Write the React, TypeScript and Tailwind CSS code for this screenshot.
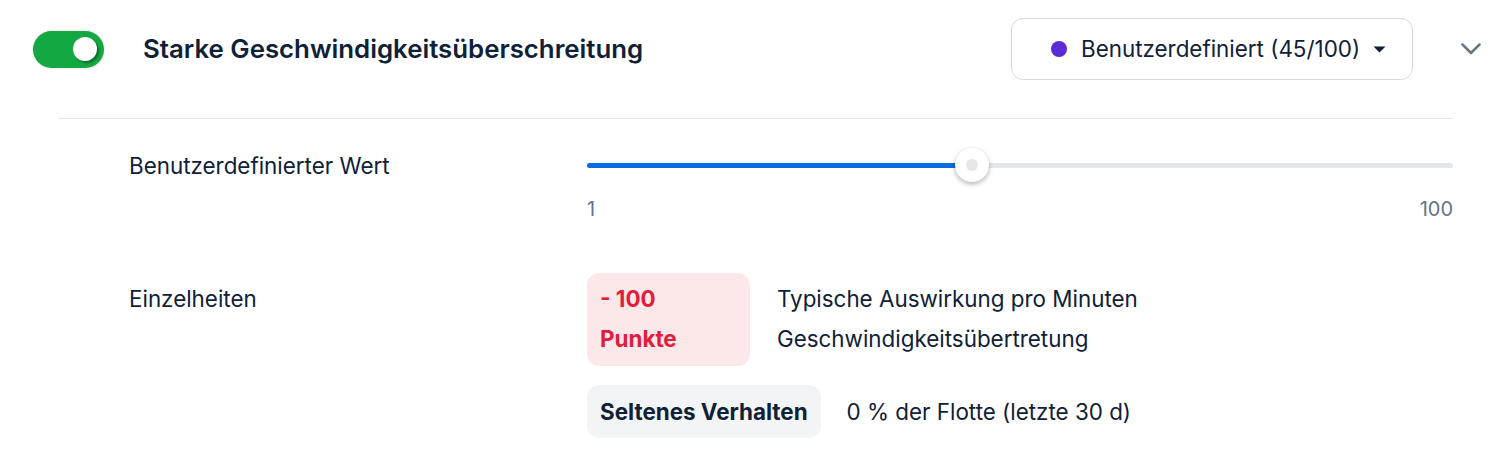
const value = 45;

export default function App() {
  const pct = ((value - 1) / 99) * 100;
  return (
    <div className="w-[1506px] h-[456px] bg-white text-[#0f2137] font-['Inter',sans-serif]">
      {/* HEADER */}
      <div className="flex items-center pl-[33px] pt-[18px]">
        <div className="w-[71px] h-[37px] rounded-full bg-[#13a841] shadow-[0_0_0_1px_rgba(0,0,0,0.06)] flex items-center justify-end pr-[7px]">
          <div className="w-[24px] h-[24px] rounded-full bg-white shadow-[2px_2px_2px_rgba(0,0,0,0.35)]" />
        </div>
        <h1 className="ml-[39px] text-[25.8px] font-semibold flex-1">Starke Geschwindigkeitsüberschreitung</h1>
        <button className="w-[402px] h-[62px] rounded-xl border border-[#d7dbe0] flex items-center pl-[39px] text-[22.4px]">
          <span className="w-[16px] h-[16px] rounded-full bg-[#5b2bd6]" />
          <span className="ml-[14px]">Benutzerdefiniert (45/100)</span>
          <svg width="13" height="7" viewBox="0 0 13 7" className="ml-[13px]">
            <path d="M0.5 0.5h12L6.5 6.5z" fill="#0f2137" />
          </svg>
        </button>
        {/* chevron */}
        <div className="w-[93px] pl-[48px] flex">
          <svg width="20" height="12" viewBox="0 0 20 12" fill="none">
            <path d="M1.5 1.5l8.5 8.5 8.5-8.5" stroke="#6b7684" strokeWidth="2.5" strokeLinecap="round" strokeLinejoin="round" />
          </svg>
        </div>
      </div>

      {/* BODY */}
      <div className="ml-[58px] w-[1395px] mt-[38px] border-t border-[#e5e7eb]">
        <div className="grid grid-cols-[529px_1fr] pt-[32px]">
          <div className="pl-[71px] text-[22.4px] leading-[30px]">Benutzerdefinierter Wert</div>
          <div>
            <div className="relative h-[28px] flex items-center">
              <div className="w-full h-[5px] rounded-full bg-[#e3e6ea]">
                <div className="h-full rounded-full bg-[#0b6be0]" style={{ width: `${pct}%` }} />
              </div>
              <div
                className="absolute top-1/2 -translate-x-1/2 -translate-y-1/2 w-[34px] h-[34px] rounded-full bg-white shadow-[0_2px_5px_rgba(0,0,0,0.3)] flex items-center justify-center"
                style={{ left: `${pct}%` }}
              >
                <div className="w-[12px] h-[12px] rounded-full bg-[#e3e6ea]" />
              </div>
            </div>
            <div className="flex justify-between mt-[16px] text-[20px] leading-[28px] text-[#64748b]">
              <span>1</span>
              <span>100</span>
            </div>
          </div>
        </div>

        <div className="grid grid-cols-[529px_1fr] mt-[50px]">
          <div className="pl-[71px] text-[22.4px] leading-[40px] pt-[6px]">Einzelheiten</div>
          <div className="flex flex-col gap-[19px]">
            <div className="flex items-start gap-[27px]">
              <div className="w-[163px] rounded-xl bg-[#fce8e8] pl-[13px] pt-[6px] pb-[7px] text-[22.4px] leading-[40px] font-bold text-[#e11d3c]">
                <div>- 100</div>
                <div>Punkte</div>
              </div>
              <div className="text-[22.4px] leading-[40px] pt-[6px]">
                <div>Typische Auswirkung pro Minuten</div>
                <div>Geschwindigkeitsübertretung</div>
              </div>
            </div>
            <div className="flex items-center gap-[26px]">
              <div className="h-[53px] rounded-xl bg-[#f3f4f6] px-[13px] flex items-center text-[22.4px] font-bold">Seltenes Verhalten</div>
              <div className="text-[22.4px]">0 % der Flotte (letzte 30 d)</div>
            </div>
          </div>
        </div>
      </div>
    </div>
  );
}
